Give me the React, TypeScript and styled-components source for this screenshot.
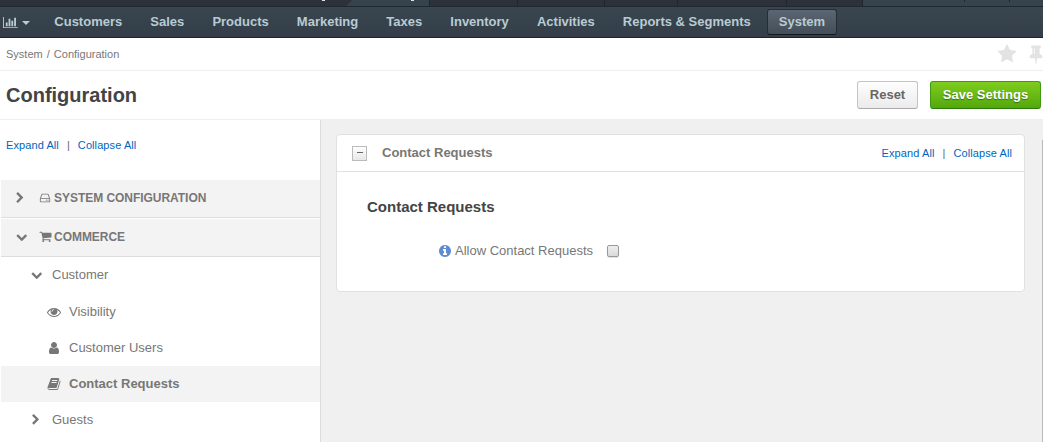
import React from "react";
import styled, { createGlobalStyle, css } from "styled-components";

const Global = createGlobalStyle`
  * { box-sizing: border-box; }
  body {
    margin: 0;
    overflow: hidden;
    background: #fff;
    color: #777;
    font: 13px/18px "Liberation Sans", Arial, sans-serif;
  }
`;

const ICONS = {
  chart: "M640 896v512h-256v-512h256zm384-512v1024h-256v-1024h256zm1024 1152v128h-2048v-1536h128v1408h1920zm-640-896v768h-256v-768h256zm384-384v1152h-256v-1152h256z",
  right: "M1363 877l-742 742q-19 19-45 19t-45-19l-166-166q-19-19-19-45t19-45l531-531-531-531q-19-19-19-45t19-45l166-166q19-19 45-19t45 19l742 742q19 19 19 45t-19 45z",
  down: "M1683 808l-742 741q-19 19-45 19t-45-19l-742-741q-19-19-19-45.5t19-45.5l166-165q19-19 45-19t45 19l531 531 531-531q19-19 45-19t45 19l166 165q19 19 19 45.5t-19 45.5z",
  cart: "M704 1536q0 52-38 90t-90 38-90-38-38-90 38-90 90-38 90 38 38 90zm896 0q0 52-38 90t-90 38-90-38-38-90 38-90 90-38 90 38 38 90zm128-1088v512q0 24-16.5 42.5t-40.5 21.5l-1044 122q13 60 13 70 0 16-24 64h920q26 0 45 19t19 45-19 45-45 19h-1024q-26 0-45-19t-19-45q0-11 8-31.5t16-36 21.5-40 15.5-29.5l-177-823h-204q-26 0-45-19t-19-45 19-45 45-19h256q16 0 28.5 6.5t19.5 15.5 13 24.5 8 26 5.5 29.5 4.5 26h1201q26 0 45 19t19 45z",
  disk: "M1168 1216q0 33-23.5 56.5t-56.5 23.5-56.5-23.5-23.5-56.5 23.5-56.5 56.5-23.5 56.5 23.5 23.5 56.5zm256 0q0 33-23.5 56.5t-56.5 23.5-56.5-23.5-23.5-56.5 23.5-56.5 56.5-23.5 56.5 23.5 23.5 56.5zm112 160v-320q0-13-9.5-22.5t-22.5-9.5h-1216q-13 0-22.5 9.5t-9.5 22.5v320q0 13 9.5 22.5t22.5 9.5h1216q13 0 22.5-9.5t9.5-22.5zm-1230-480h1180l-157-482q-4-13-16-21.5t-26-8.5h-782q-14 0-26 8.5t-16 21.5zm1358 160v320q0 66-47 113t-113 47h-1216q-66 0-113-47t-47-113v-320q0-25 16-75l197-606q17-53 63-86t101-33h782q55 0 101 33t63 86l197 606q16 50 16 75z",
  eye: "M1664 960q-152-236-381-353 61 104 61 225 0 185-131.5 316.5t-316.5 131.5-316.5-131.5-131.5-316.5q0-121 61-225-229 117-381 353 133 205 333.5 326.5t434.5 121.5 434.5-121.5 333.5-326.5zm-720-384q0-20-14-34t-34-14q-125 0-214.5 89.5t-89.5 214.5q0 20 14 34t34 14 34-14 14-34q0-86 61-147t147-61q20 0 34-14t14-34zm848 384q0 34-20 69-140 230-376.5 368.5t-499.5 138.5-499.5-139-376.5-368q-20-35-20-69t20-69q140-229 376.5-368t499.5-139 499.5 139 376.5 368q20 35 20 69z",
  user: "M1536 1399q0 109-62.5 187t-150.5 78h-854q-88 0-150.5-78t-62.5-187q0-85 8.5-160.5t31.5-152 58.5-131 94-89 134.5-34.5q131 128 313 128t313-128q76 0 134.5 34.5t94 89 58.5 131 31.5 152 8.5 160.5zm-256-887q0 159-112.5 271.5t-271.5 112.5-271.5-112.5-112.5-271.5 112.5-271.5 271.5-112.5 271.5 112.5 112.5 271.5z",
  book: "M1703 478q40 57 18 129l-275 906q-19 64-76.5 107.5t-122.5 43.5h-923q-77 0-148.5-53.5t-99.5-131.5q-24-67-2-127 0-4 3-27t4-37q1-8-3-21.5t-3-19.5q2-11 8-21t16.5-23.5 16.5-23.5q23-38 45-91.5t30-91.5q3-10 .5-30t-.5-28q3-11 17-28t17-23q21-36 42-92t25-90q1-9-2.5-32t.5-28q4-13 22-30.5t22-22.5q19-26 42.5-84.5t27.5-96.5q1-8-3-25.5t-2-26.5q2-8 9-18t18-23 17-21q8-12 16.5-30.5t15-35 16-36 19.5-32 26.5-23.5 36-11.5 47.5 5.5l-1 3q38-9 51-9h761q74 0 114 56t18 130l-274 906q-36 119-71.5 153.5t-128.5 34.5h-869q-27 0-38 15-11 16-1 43 24 70 144 70h923q29 0 56-15.5t35-41.5l300-987q7-22 5-57 38 15 59 43zm-1064 2q-4 13 2 22.5t20 9.5h608q13 0 25.5-9.5t16.5-22.5l21-64q4-13-2-22.5t-20-9.5h-608q-13 0-25.5 9.5t-16.5 22.5zm-83 256q-4 13 2 22.5t20 9.5h608q13 0 25.5-9.5t16.5-22.5l21-64q4-13-2-22.5t-20-9.5h-608q-13 0-25.5 9.5t-16.5 22.5z",
  info: "M1152 1376v-160q0-14-9-23t-23-9h-96v-512q0-14-9-23t-23-9h-320q-14 0-23 9t-9 23v160q0 14 9 23t23 9h96v320h-96q-14 0-23 9t-9 23v160q0 14 9 23t23 9h448q14 0 23-9t9-23zm-128-896v-160q0-14-9-23t-23-9h-192q-14 0-23 9t-9 23v160q0 14 9 23t23 9h192q14 0 23-9t9-23zm640 416q0 209-103 385.5t-279.5 279.5-385.5 103-385.5-103-279.5-279.5-103-385.5 103-385.5 279.5-279.5 385.5-103 385.5 103 279.5 279.5 103 385.5z",
  star: "M1728 647q0 22-26 48l-363 354 86 500q1 7 1 20 0 21-10.5 35.5t-30.5 14.5q-19 0-40-12l-449-236-449 236q-22 12-40 12-21 0-31.5-14.5t-10.5-35.5q0-6 2-20l86-500-364-354q-25-27-25-48 0-37 56-46l502-73 225-455q19-41 49-41t49 41l225 455 502 73q56 9 56 46z",
  pin: "M800 864v-448q0-14-9-23t-23-9-23 9-9 23v448q0 14 9 23t23 9 23-9 9-23zm672 352q0 26-19 45t-45 19h-429l-51 483q-2 12-10.5 20.5t-20.5 8.5h-1q-27 0-32-27l-76-485h-404q-26 0-45-19t-19-45q0-123 78.5-221.5t177.5-98.5v-512q-52 0-90-38t-38-90 38-90 90-38h640q52 0 90 38t38 90-38 90-90 38v512q99 0 177.5 98.5t78.5 221.5z",
};

type IconName = keyof typeof ICONS;

const Svg = styled.svg`
  display: block;
  flex: none;
  fill: currentColor;
`;

function Icon({ name, size = 14 }: { name: IconName; size?: number }) {
  const w = name === "chart" ? 2048 : 1792;
  return (
    <Svg width={(size * w) / 1792} height={size} viewBox={`0 0 ${w} 1792`}>
      <path d={ICONS[name]} />
    </Svg>
  );
}

const Page = styled.div`
  display: flex;
  flex-direction: column;
  width: 1043px;
  height: 442px;
  overflow: hidden;
`;

const TabStrip = styled.div`
  display: flex;
  height: 6px;
  flex: none;
  background: #2d323a;
`;

const Tab = styled.div<{ $width: number; $active?: boolean }>`
  width: ${(p) => p.$width}px;
  border-right: 1px solid #20262e;
  ${(p) =>
    p.$active &&
    css`
      padding-left: 65px;
      background: #37434c;
      clip-path: polygon(6px 0, 100% 0, 100% 100%, 0 100%);
    `}
`;

const TabLead = styled.div`
  width: 346px;
  padding-left: 322px;
`;

const Speck = styled.div`
  width: 3px;
  height: 1px;
  background: #dfe3e8;
`;

const TabRest = styled.div`
  flex: 1;
  display: flex;
  background: #37434c;
`;

const Tick = styled.div<{ $gap: number }>`
  width: 1px;
  height: 2px;
  margin-left: ${(p) => p.$gap}px;
  background: #20262e;
`;

const NavBar = styled.nav`
  display: flex;
  flex: none;
  align-items: flex-start;
  height: 32px;
  padding: 2px 0 0 3px;
  border-top: 1px solid #1f2830;
  border-bottom: 1px solid #1b232b;
  background: linear-gradient(#3a464f, #333e48);
  color: #b9cbd3;
`;

const Dashboard = styled.div`
  display: flex;
  align-items: center;
  gap: 4px;
  width: 36px;
  height: 26px;
`;

const Caret = styled.span`
  margin-top: 1px;
  border: 4px solid transparent;
  border-top-color: currentColor;
  border-bottom: 0;
`;

const NavList = styled.div`
  display: flex;
  gap: 4.1px;
  margin-left: 3.3px;
`;

const NavItem = styled.a<{ $active?: boolean }>`
  height: 26px;
  padding: 0 11px;
  border: 1px solid transparent;
  border-radius: 3px;
  font-weight: bold;
  line-height: 23px;
  white-space: nowrap;
  ${(p) =>
    p.$active &&
    css`
      border-color: #252d35;
      border-bottom-color: #14191e;
      background: linear-gradient(#5b6672, #444e58);
    `}
`;

const Crumbs = styled.div`
  display: flex;
  flex: none;
  align-items: center;
  justify-content: space-between;
  height: 33px;
  padding-left: 6px;
  border-bottom: 1px solid #efefef;
  font-size: 11px;
`;

const CrumbTrail = styled.span`
  word-spacing: 1px;
`;

const CrumbActions = styled.div`
  display: flex;
  gap: 9px;
  margin-right: -3px;
  color: #e3e3e3;
`;

const TitleBar = styled.header`
  display: flex;
  flex: none;
  align-items: center;
  height: 49px;
  padding: 0 2px 0 6px;
  border-bottom: 1px solid #efefef;
`;

const Title = styled.h1`
  flex: 1;
  margin: 0;
  color: #444;
  font-size: 20px;
  line-height: 24px;
`;

const Button = styled.button<{ $primary?: boolean }>`
  height: 28px;
  width: ${(p) => (p.$primary ? 111 : 61)}px;
  margin: 0 0 0 12px;
  padding: 0 0 1px;
  border: 1px solid #c4c4c4;
  border-bottom-color: #aaa;
  border-radius: 3px;
  background: linear-gradient(#fefefe, #ebebeb);
  color: #666;
  font: bold 13px/24px "Liberation Sans", Arial, sans-serif;
  white-space: nowrap;
  ${(p) =>
    p.$primary &&
    css`
      border-color: #3f9a12;
      border-bottom-color: #2d7a08;
      background: linear-gradient(#80cc1e, #52a80c);
      color: #fff;
      text-shadow: 0 1px 1px rgba(0, 0, 0, 0.4);
    `}
`;

const Body = styled.div`
  display: flex;
  flex: 1;
  min-height: 0;
`;

const Sidebar = styled.aside`
  width: 321px;
  padding-left: 1px;
  border-right: 1px solid #ddd;
`;

const Links = styled.div<{ $side?: boolean }>`
  display: flex;
  gap: 8px;
  color: #666;
  font-size: 11px;
  line-height: 18px;
  letter-spacing: 0.09px;
  ${(p) => p.$side && css`padding: 16px 0 26px 5px;`}
`;

const Link = styled.a`
  color: #0066c0;
`;

const Group = styled.div`
  display: flex;
  align-items: center;
  height: 38px;
  margin-bottom: 1px;
  padding: 0 0 2px 12px;
  border-bottom: 1px solid #ddd;
  background: #f3f3f3;
  font-size: 12px;
  font-weight: bold;
  letter-spacing: -0.04px;
`;

const ToggleSlot = styled.span<{ $width: number; $inset?: number }>`
  display: flex;
  width: ${(p) => p.$width}px;
  padding-left: ${(p) => p.$inset ?? 0}px;
`;

const Branch = styled.div<{ $first?: boolean }>`
  display: flex;
  align-items: center;
  height: 36px;
  padding-left: 29px;
  ${(p) => p.$first && css`padding-bottom: 2px;`}
`;

const Leaf = styled.div<{ $active?: boolean }>`
  display: flex;
  align-items: center;
  height: 36px;
  padding-left: 46px;
  ${(p) => p.$active && css`background: #f3f3f3; font-weight: bold;`}
`;

const Content = styled.main`
  display: flex;
  flex: 1;
  align-items: flex-start;
  justify-content: space-between;
  padding: 14px 0 0 15px;
  background: #f0f0f0;
`;

const Card = styled.section`
  width: 689px;
  height: 158px;
  border: 1px solid #e1e1e1;
  border-radius: 4px;
  background: #fff;
`;

const CardHead = styled.div`
  display: flex;
  align-items: center;
  height: 37px;
  padding: 0 12px 0 15px;
  border-bottom: 1px solid #e1e1e1;
`;

const CardTitle = styled.div`
  flex: 1;
  margin-left: 15px;
  font-weight: bold;
`;

const Collapse = styled.span`
  display: flex;
  align-items: center;
  justify-content: center;
  width: 15px;
  height: 15px;
  border: 1px solid #bbb;
  background: linear-gradient(#fdfdfd, #e8e8e8);
  &::before {
    content: "";
    width: 6px;
    height: 1px;
    margin-bottom: 1px;
    background: #666;
  }
`;

const SectionTitle = styled.h2`
  margin: 26px 0 0 30px;
  color: #444;
  font-size: 15px;
  line-height: 18px;
`;

const Field = styled.label`
  display: flex;
  align-items: center;
  margin: 26px 0 0 101px;
`;

const InfoMark = styled.span`
  margin-right: 3px;
  color: #5f8bd0;
`;

const Check = styled.span`
  width: 12px;
  height: 12px;
  margin: 0 0 1px 14px;
  border: 1px solid #999;
  border-radius: 2px;
  background: linear-gradient(#eee, #d9d9d9);
  box-shadow: 0 1px 1px rgba(0, 0, 0, 0.12);
`;

const ScrollThumb = styled.div`
  width: 1px;
  height: 302px;
  margin-top: 6px;
  background: #b9b9b9;
`;

const MENU = ["Customers", "Sales", "Products", "Marketing", "Taxes", "Inventory", "Activities", "Reports & Segments", "System"];

function ExpandLinks({ side }: { side?: boolean }) {
  return (
    <Links $side={side}>
      <Link>Expand All</Link>
      <span>|</span>
      <Link>Collapse All</Link>
    </Links>
  );
}

export default function App() {
  return (
    <>
      <Global />
      <Page>
        <TabStrip>
          <TabLead><Speck /></TabLead>
          <Tab $width={84} $active><Speck /></Tab>
          <Tab $width={88} />
          <Tab $width={87} />
          <Tab $width={73} />
          <Tab $width={109} />
          <Tab $width={76} />
          <TabRest>
            <Tick $gap={101} />
            <Tick $gap={44} />
          </TabRest>
        </TabStrip>
        <NavBar>
          <Dashboard>
            <Icon name="chart" size={13} />
            <Caret />
          </Dashboard>
          <NavList>
            {MENU.map((m) => (
              <NavItem key={m} $active={m === "System"}>{m}</NavItem>
            ))}
          </NavList>
        </NavBar>
        <Crumbs>
          <CrumbTrail>System / Configuration</CrumbTrail>
          <CrumbActions>
            <Icon name="star" size={20} />
            <Icon name="pin" size={20} />
          </CrumbActions>
        </Crumbs>
        <TitleBar>
          <Title>Configuration</Title>
          <Button>Reset</Button>
          <Button $primary>Save Settings</Button>
        </TitleBar>
        <Body>
          <Sidebar>
            <ExpandLinks side />
            <Group>
              <ToggleSlot $width={26} $inset={1}><Icon name="right" size={12} /></ToggleSlot>
              <ToggleSlot $width={15}><Icon name="disk" size={12} /></ToggleSlot>
              SYSTEM CONFIGURATION
            </Group>
            <Group>
              <ToggleSlot $width={26} $inset={3}><Icon name="down" size={11.5} /></ToggleSlot>
              <ToggleSlot $width={15}><Icon name="cart" size={13} /></ToggleSlot>
              COMMERCE
            </Group>
            <Branch $first>
              <ToggleSlot $width={22} $inset={1}><Icon name="down" size={11.5} /></ToggleSlot>
              Customer
            </Branch>
            <Leaf>
              <ToggleSlot $width={22}><Icon name="eye" size={14} /></ToggleSlot>
              Visibility
            </Leaf>
            <Leaf>
              <ToggleSlot $width={22}><Icon name="user" size={14} /></ToggleSlot>
              Customer Users
            </Leaf>
            <Leaf $active>
              <ToggleSlot $width={22}><Icon name="book" size={14} /></ToggleSlot>
              Contact Requests
            </Leaf>
            <Branch>
              <ToggleSlot $width={22}><Icon name="right" size={11.5} /></ToggleSlot>
              Guests
            </Branch>
          </Sidebar>
          <Content>
            <Card>
              <CardHead>
                <Collapse />
                <CardTitle>Contact Requests</CardTitle>
                <ExpandLinks />
              </CardHead>
              <SectionTitle>Contact Requests</SectionTitle>
              <Field>
                <InfoMark><Icon name="info" size={14} /></InfoMark>
                Allow Contact Requests
                <Check />
              </Field>
            </Card>
            <ScrollThumb />
          </Content>
        </Body>
      </Page>
    </>
  );
}
